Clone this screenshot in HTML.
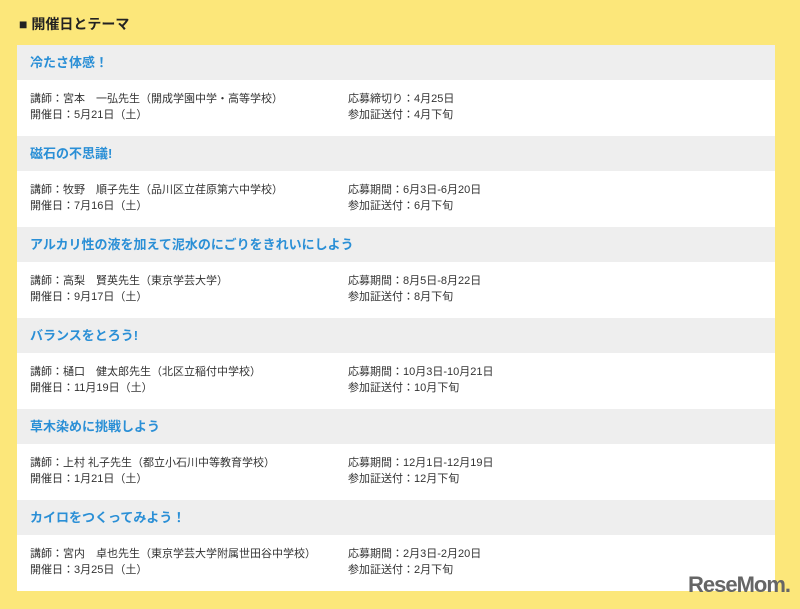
<!DOCTYPE html>
<html><head><meta charset="utf-8"><style>
body{margin:0;width:800px;height:609px;background:#fce77a;font-family:"Liberation Sans","Noto Sans CJK JP",sans-serif;position:relative;overflow:hidden}
h2{position:absolute;left:19px;top:14px;margin:0;font-size:14px;font-weight:bold;color:#222}
.panel{position:absolute;left:17px;top:45px;width:758px}
.hd{height:35px;background:#eeeeee;color:#2a8fd6;font-weight:bold;font-size:13px;line-height:35px;padding-left:13px}
.bd{height:56px;background:#fff;font-size:11px;color:#333;position:relative}
.bd div{position:absolute;line-height:16px}
.l{left:13px;top:11px}.r{left:331px;top:11px}
.logo{position:absolute;left:688px;top:572px;font-size:22px;font-weight:bold;color:#666;letter-spacing:-1px}
</style></head><body>
<h2>■ 開催日とテーマ</h2>
<div class="panel">
<div class="hd">冷たさ体感！</div><div class="bd"><div class="l">講師：宮本　一弘先生（開成学園中学・高等学校）<br>開催日：5月21日（土）</div><div class="r">応募締切り：4月25日<br>参加証送付：4月下旬</div></div>
<div class="hd">磁石の不思議!</div><div class="bd"><div class="l">講師：牧野　順子先生（品川区立荏原第六中学校）<br>開催日：7月16日（土）</div><div class="r">応募期間：6月3日-6月20日<br>参加証送付：6月下旬</div></div>
<div class="hd">アルカリ性の液を加えて泥水のにごりをきれいにしよう</div><div class="bd"><div class="l">講師：高梨　賢英先生（東京学芸大学）<br>開催日：9月17日（土）</div><div class="r">応募期間：8月5日-8月22日<br>参加証送付：8月下旬</div></div>
<div class="hd">バランスをとろう!</div><div class="bd"><div class="l">講師：樋口　健太郎先生（北区立稲付中学校）<br>開催日：11月19日（土）</div><div class="r">応募期間：10月3日-10月21日<br>参加証送付：10月下旬</div></div>
<div class="hd">草木染めに挑戦しよう</div><div class="bd"><div class="l">講師：上村 礼子先生（都立小石川中等教育学校）<br>開催日：1月21日（土）</div><div class="r">応募期間：12月1日-12月19日<br>参加証送付：12月下旬</div></div>
<div class="hd">カイロをつくってみよう！</div><div class="bd"><div class="l">講師：宮内　卓也先生（東京学芸大学附属世田谷中学校）<br>開催日：3月25日（土）</div><div class="r">応募期間：2月3日-2月20日<br>参加証送付：2月下旬</div></div>
</div>
<div class="logo">ReseMom.</div>
</body></html>
